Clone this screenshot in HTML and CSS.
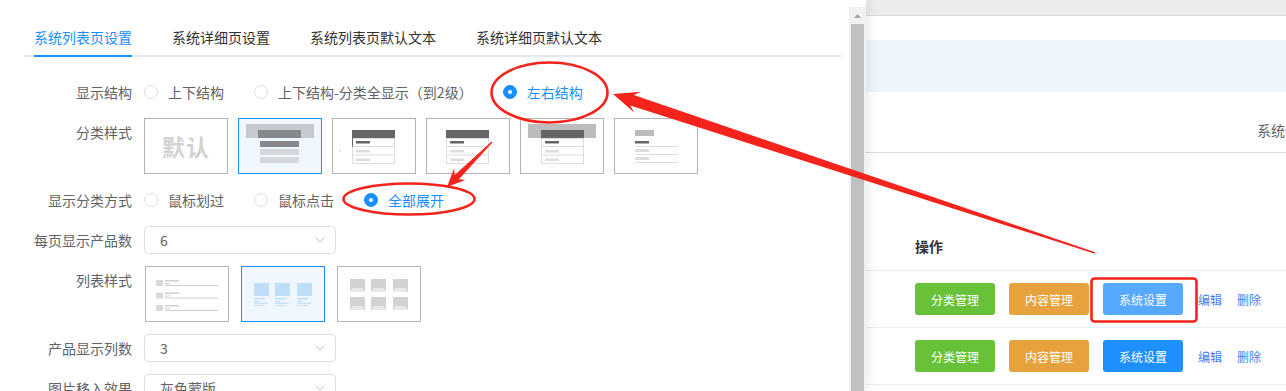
FILE: index.html
```html
<!DOCTYPE html>
<html>
<head>
  <meta charset="UTF-8">
  <link rel="stylesheet" href="styles.css">
</head>
<body>
  <div class="page">
    <div class="drawer">
      <div class="drawer-body">
        <div class="tabs">
          <div class="tab active">系统列表页设置</div>
          <div class="tab">系统详细页设置</div>
          <div class="tab">系统列表页默认文本</div>
          <div class="tab">系统详细页默认文本</div>
        </div>
        <div class="form">
          <div class="form-item">
            <div class="form-label">显示结构</div>
            <div class="radios">
              <label class="radio"><span class="radio-dot"></span>上下结构</label>
              <label class="radio"><span class="radio-dot"></span>上下结构-分类全显示（到2级）</label>
              <label class="radio checked"><span class="radio-dot"></span>左右结构</label>
            </div>
          </div>
          <div class="form-item">
            <div class="form-label">分类样式</div>
            <div class="thumbs">
              <div class="thumb thumb-text">默认</div>
              <div class="thumb on">
                <svg width="82" height="54">
                  <rect x="7" y="5" width="68" height="14" fill="#c4cacd"/>
                  <rect x="19" y="11" width="43" height="8" fill="#85888d"/>
                  <rect x="21" y="22" width="39" height="6" fill="#86888c"/>
                  <rect x="21" y="30" width="39" height="6" fill="#d4d8dc"/>
                  <rect x="21" y="38" width="39" height="6" fill="#d4d8dc"/>
                </svg>
              </div>
              <div class="thumb">
                <svg width="82" height="54">
                  <rect x="19" y="11" width="43" height="8" fill="#666"/>
                  <rect x="19.5" y="19.5" width="42" height="25" fill="none" stroke="#ddd"/>
                  <line x1="19.5" y1="27.5" x2="61.5" y2="27.5" stroke="#ddd"/>
                  <line x1="19.5" y1="36" x2="61.5" y2="36" stroke="#ddd"/>
                  <line x1="19.5" y1="19" x2="19.5" y2="27.5" stroke="#666"/>
                  <rect x="23" y="22" width="14" height="2.5" fill="#666"/>
                  <rect x="23" y="31" width="14" height="2.5" fill="#ddd"/>
                  <rect x="23" y="39.5" width="14" height="2.5" fill="#ddd"/>
                  <rect x="6" y="31" width="1" height="1" fill="#aaa"/>
                </svg>
              </div>
              <div class="thumb">
                <svg width="82" height="54">
                  <rect x="19" y="11" width="43" height="8" fill="#666"/>
                  <rect x="19.5" y="19.5" width="42" height="25" fill="none" stroke="#ddd"/>
                  <line x1="19.5" y1="27.5" x2="61.5" y2="27.5" stroke="#ddd"/>
                  <line x1="19.5" y1="36" x2="61.5" y2="36" stroke="#ddd"/>
                  <rect x="23" y="22" width="14" height="2.5" fill="#666"/>
                  <rect x="23" y="31" width="14" height="2.5" fill="#ddd"/>
                  <rect x="23" y="39.5" width="14" height="2.5" fill="#ddd"/>
                </svg>
              </div>
              <div class="thumb">
                <svg width="82" height="54">
                  <rect x="7" y="5" width="68" height="14" fill="#bcbcbc"/>
                  <rect x="20" y="11" width="43" height="8" fill="#666"/>
                  <rect x="20.5" y="19.5" width="42" height="25" fill="none" stroke="#ddd"/>
                  <line x1="20.5" y1="27.5" x2="62.5" y2="27.5" stroke="#ddd"/>
                  <line x1="20.5" y1="36" x2="62.5" y2="36" stroke="#ddd"/>
                  <rect x="24" y="22" width="14" height="2.5" fill="#666"/>
                  <rect x="24" y="31" width="14" height="2.5" fill="#ddd"/>
                  <rect x="24" y="39.5" width="14" height="2.5" fill="#ddd"/>
                </svg>
              </div>
              <div class="thumb">
                <svg width="82" height="54">
                  <rect x="20" y="11" width="19" height="6" fill="#bbb"/>
                  <rect x="20" y="22" width="14" height="2.5" fill="#666"/>
                  <rect x="20" y="27" width="43" height="1" fill="#ddd"/>
                  <rect x="20" y="30" width="14" height="3" fill="#ddd"/>
                  <rect x="20" y="35" width="43" height="1" fill="#ddd"/>
                  <rect x="20" y="38" width="14" height="3" fill="#ddd"/>
                  <rect x="20" y="43" width="43" height="1" fill="#ddd"/>
                </svg>
              </div>
            </div>
          </div>
          <div class="form-item">
            <div class="form-label">显示分类方式</div>
            <div class="radios">
              <label class="radio"><span class="radio-dot"></span>鼠标划过</label>
              <label class="radio"><span class="radio-dot"></span>鼠标点击</label>
              <label class="radio checked"><span class="radio-dot"></span>全部展开</label>
            </div>
          </div>
          <div class="form-item sel">
            <div class="form-label">每页显示产品数</div>
            <div class="select">
              <span>6</span>
              <svg class="caret" width="10" height="6"><polyline points="0.5,0.5 5,5 9.5,0.5" fill="none" stroke="#c0c4cc"/></svg>
            </div>
          </div>
          <div class="form-item">
            <div class="form-label">列表样式</div>
            <div class="thumbs list-thumbs">
              <div class="thumb">
                <svg width="82" height="54">
                  <rect x="10" y="13" width="7" height="6" fill="#d9d9d9"/>
                  <rect x="19" y="13" width="14" height="1.5" fill="#cfcfcf"/>
                  <rect x="19" y="16" width="5" height="1" fill="#cfcfcf"/>
                  <rect x="19" y="18" width="53" height="1" fill="#cfcfcf"/>
                  <rect x="10" y="25.5" width="7" height="6" fill="#d9d9d9"/>
                  <rect x="19" y="25.5" width="14" height="1.5" fill="#cfcfcf"/>
                  <rect x="19" y="28.5" width="5" height="1" fill="#cfcfcf"/>
                  <rect x="19" y="30.5" width="53" height="1" fill="#cfcfcf"/>
                  <rect x="10" y="38" width="7" height="6" fill="#d9d9d9"/>
                  <rect x="19" y="38" width="14" height="1.5" fill="#cfcfcf"/>
                  <rect x="19" y="41" width="5" height="1" fill="#cfcfcf"/>
                  <rect x="19" y="43" width="53" height="1" fill="#cfcfcf"/>
                </svg>
              </div>
              <div class="thumb on">
                <svg width="82" height="54" fill="#bfdff8">
                  <rect x="12" y="16" width="15" height="13"/>
                  <rect x="12" y="31" width="11" height="1.5"/>
                  <rect x="12" y="34" width="5" height="1"/>
                  <rect x="12" y="35.7" width="14" height="1.2"/>
                  <rect x="12" y="38" width="11" height="1"/>
                  <rect x="33" y="16" width="15" height="13"/>
                  <rect x="33" y="31" width="11" height="1.5"/>
                  <rect x="33" y="34" width="5" height="1"/>
                  <rect x="33" y="35.7" width="14" height="1.2"/>
                  <rect x="33" y="38" width="11" height="1"/>
                  <rect x="55" y="16" width="15" height="13"/>
                  <rect x="55" y="31" width="11" height="1.5"/>
                  <rect x="55" y="34" width="5" height="1"/>
                  <rect x="55" y="35.7" width="14" height="1.2"/>
                  <rect x="55" y="38" width="11" height="1"/>
                </svg>
              </div>
              <div class="thumb">
                <svg width="82" height="54">
                  <g id="pic">
                    <rect x="12" y="12" width="15" height="13" fill="#d2d2d2"/>
                    <polygon points="14,21 25,21 27,25 12,25" fill="#e8e8e8"/>
                  </g>
                  <use href="#pic" x="21"/>
                  <use href="#pic" x="43"/>
                  <use href="#pic" y="18"/>
                  <use href="#pic" x="21" y="18"/>
                  <use href="#pic" x="43" y="18"/>
                </svg>
              </div>
            </div>
          </div>
          <div class="form-item sel">
            <div class="form-label">产品显示列数</div>
            <div class="select">
              <span>3</span>
              <svg class="caret" width="10" height="6"><polyline points="0.5,0.5 5,5 9.5,0.5" fill="none" stroke="#c0c4cc"/></svg>
            </div>
          </div>
          <div class="form-item sel">
            <div class="form-label">图片移入效果</div>
            <div class="select">
              <span>灰色蒙版</span>
              <svg class="caret" width="10" height="6"><polyline points="0.5,0.5 5,5 9.5,0.5" fill="none" stroke="#c0c4cc"/></svg>
            </div>
          </div>
        </div>
      </div>
      <div class="scrollbar">
        <div class="scroll-up"><svg width="7" height="4"><polygon points="3.5,0 7,4 0,4" fill="#a3a3a3"/></svg></div>
        <div class="scroll-thumb"></div>
      </div>
    </div>

    <div class="main">
      <div class="topbar"></div>
      <div class="banner"></div>
      <div class="head-row">系统设置</div>
      <div class="th-row">操作</div>
      <div class="tr">
        <span class="btn green">分类管理</span>
        <span class="btn orange">内容管理</span>
        <span class="btn blue hover">系统设置</span>
        <span class="links"><a>编辑</a><a>删除</a></span>
      </div>
      <div class="tr">
        <span class="btn green">分类管理</span>
        <span class="btn orange">内容管理</span>
        <span class="btn blue">系统设置</span>
        <span class="links"><a>编辑</a><a>删除</a></span>
      </div>
    </div>

    <!-- red annotations drawn over the screenshot -->
    <svg class="marks" width="1286" height="391">
      <ellipse cx="549.5" cy="92.5" rx="58" ry="30" fill="none" stroke="#f4231b" stroke-width="2.6"/>
      <ellipse cx="409" cy="199" rx="65.5" ry="15.5" fill="none" stroke="#f4231b" stroke-width="2.6"/>
      <rect x="1091.5" y="278.5" width="105" height="43" rx="3" fill="none" stroke="#f4231b" stroke-width="2.6"/>
      <polygon fill="#f4231b" points="613,94 634.2,112.6 630.3,105.5 1094.8,253.7 1095.2,252.3 633.7,95.1 641.1,91.8"/>
      <polygon fill="#f4231b" points="447,187 465.4,180 459,179.2 492.4,142.4 491.6,141.6 454.8,175 454,168.6"/>
    </svg>
  </div>
</body>
</html>
```

FILE: styles.css
```css
body { margin: 0; font-family: "Noto Sans CJK SC", sans-serif; font-size: 14px; color: #606266; background: #fff; overflow: hidden; }
.page { display: flex; width: 1286px; height: 391px; position: relative; overflow: hidden; }

/* drawer on the left */
.drawer { display: flex; width: 866px; flex: none; position: relative; z-index: 1; background: #fff; box-shadow: 2px 0 12px rgba(0,0,0,0.09); }
.drawer-body { width: 849px; padding: 20px 8px 0 24px; box-sizing: border-box; }
.tabs { display: flex; gap: 40px; padding-left: 10px; height: 35px; border-bottom: 2px solid #e4e7ed; }
.tab { line-height: 35px; color: #303133; position: relative; white-space: nowrap; }
.tab.active { color: #1890ff; }
.tab.active::after { content: ""; position: absolute; left: 0; right: 0; bottom: -2px; height: 2px; background: #1890ff; }

.form { padding-top: 21px; }
.form-item { display: flex; margin-bottom: 12px; }
.form-item.sel { margin-top: 1px; }
.form-label { width: 120px; flex: none; padding-right: 12px; box-sizing: border-box; text-align: right; line-height: 28px; white-space: nowrap; }

.radios { display: flex; align-items: center; gap: 30px; height: 28px; }
.radio { display: flex; align-items: center; gap: 10px; white-space: nowrap; }
.radio-dot { width: 14px; height: 14px; border: 1px solid #dcdfe6; border-radius: 50%; box-sizing: border-box; position: relative; }
.radio.checked { color: #1890ff; }
.radio.checked .radio-dot { background: #1890ff; border-color: #1890ff; }
.radio.checked .radio-dot::after { content: ""; position: absolute; left: 4px; top: 4px; width: 4px; height: 4px; border-radius: 50%; background: #fff; }

.thumbs { display: flex; gap: 10px; }
.list-thumbs { gap: 12px; margin-left: 1px; }
.thumb { width: 84px; height: 56px; border: 1px solid #b4b4b6; box-sizing: border-box; background: #fff; }
.thumb svg { display: block; }
.thumb.on { border-color: #1890ff; background: #f0f7ff; }
.thumb-text { display: flex; align-items: center; justify-content: center; font-size: 23px; font-weight: bold; color: #d2d2d2; letter-spacing: 1px; }

.select { width: 192px; height: 28px; border: 1px solid #dcdfe6; border-radius: 4px; box-sizing: border-box; display: flex; align-items: center; justify-content: space-between; padding: 0 10px 0 15px; color: #606266; }
.caret { display: block; }

.scrollbar { width: 17px; margin-top: 7px; background: #f1f1f1; display: flex; flex-direction: column; align-items: center; }
.scroll-up { height: 17px; display: flex; align-items: center; justify-content: center; }
.scroll-up svg { display: block; }
.scroll-thumb { width: 13px; flex: 1; background: #c1c1c1; }

/* page behind the drawer */
.main { flex: 1; display: flex; flex-direction: column; min-width: 0; }
.topbar { height: 15px; background: #ececec; border-bottom: 1px solid #dcdcdc; }
.banner { height: 52px; margin-top: 24px; background: #eef5fd; }
.head-row { height: 61px; box-sizing: border-box; padding: 28px 0 0 391px; line-height: 20px; border-bottom: 1px solid #dcdcdc; white-space: nowrap; overflow: hidden; }
.th-row { height: 118px; box-sizing: border-box; padding: 83px 0 0 49px; line-height: 20px; font-weight: bold; color: #333; border-bottom: 1px solid #e9edf4; }
.tr { height: 57px; box-sizing: border-box; display: flex; align-items: center; gap: 14px; padding-left: 49px; border-bottom: 1px solid #e9edf4; }
.btn { width: 80px; height: 32px; flex: none; border-radius: 3px; color: #fff; font-size: 12px; display: flex; align-items: center; justify-content: center; }
.btn.green { background: #67c23a; }
.btn.orange { background: #e6a23c; }
.btn.blue { background: #1e8fff; }
.btn.blue.hover { background: #57a8ff; }
.links { display: flex; gap: 15px; margin-left: 1px; font-size: 12px; white-space: nowrap; }
.links a { color: #3f7ef3; }

.marks { position: absolute; left: 0; top: 0; z-index: 5; pointer-events: none; }
```
